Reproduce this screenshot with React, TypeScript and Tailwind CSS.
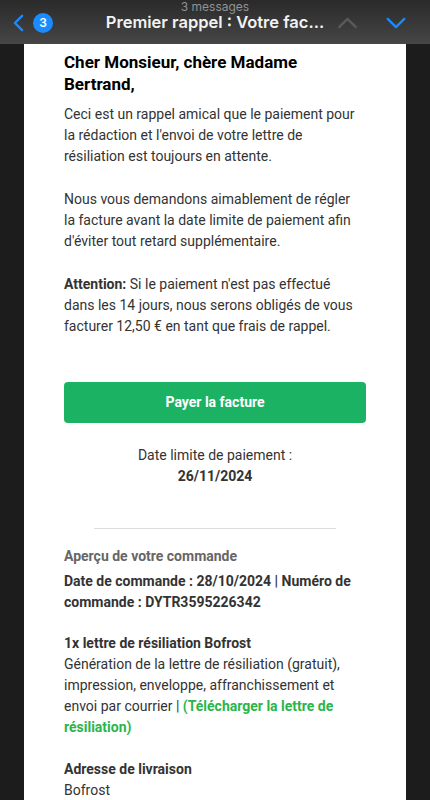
import React from 'react';

function Chevron({ dir, className }: { dir: 'left' | 'up' | 'down'; className?: string }) {
  if (dir === 'left') {
    return (
      <svg viewBox="0 0 12 20" className={className} fill="none">
        <path d="M10 2L2 10l8 8" stroke="currentColor" strokeWidth="2.6" strokeLinecap="round" strokeLinejoin="round" />
      </svg>
    );
  }
  const d = dir === 'up' ? 'M2 11L11 2l9 9' : 'M2 2l9 9 9-9';
  return (
    <svg viewBox="0 0 22 13" className={className} fill="none">
      <path d={d} stroke="currentColor" strokeWidth="2.4" strokeLinecap="round" strokeLinejoin="round" />
    </svg>
  );
}

function Header() {
  return (
    <header className="relative h-[44px] bg-gradient-to-b from-[#2a2a2a] to-[#464646] font-['Inter',sans-serif]">
      <div className="absolute left-0 right-0 top-0 text-center text-[12px] leading-[13px] text-[#929292]">
        3 messages
      </div>
      <div className="grid h-full grid-cols-[1fr_auto_1fr] items-center pt-[1px]">
        <div className="flex items-center gap-[9px] pl-[13px]">
          <Chevron dir="left" className="h-[18px] w-[11px] text-[#1a8cff]" />
          <span className="flex h-[20px] w-[20px] items-center justify-center rounded-full bg-[#1a8cff] text-[12px] font-semibold text-white">
            3
          </span>
        </div>
        <div className="text-[16.5px] font-semibold text-[#f2f2f2]">Premier rappel : Votre fac...</div>
        <div className="flex items-center justify-end gap-[27px] pr-[23px]">
          <Chevron dir="up" className="h-[12px] w-[21px] text-[#5a5a5a]" />
          <Chevron dir="down" className="h-[12px] w-[22px] text-[#1a8cff]" />
        </div>
      </div>
    </header>
  );
}

export default function App() {
  return (
    <div className="h-[800px] overflow-hidden bg-[#1c1c1c]">
      <Header />
      <main className="mx-[24px] h-[756px] bg-white px-[40px] pt-[7px] font-['Roboto',sans-serif] text-[14px] leading-[21px] text-[#333333]">
        <h1 className="text-[17px] font-bold leading-[22px] text-black">Cher Monsieur, chère Madame Bertrand,</h1>
        <div className="pr-[6px]">
          <p className="mt-[9px]">
            Ceci est un rappel amical que le paiement pour la rédaction et l'envoi de votre lettre de résiliation est
            toujours en attente.
          </p>
          <p className="mt-[22px]">
            Nous vous demandons aimablement de régler la facture avant la date limite de paiement afin d'éviter tout
            retard supplémentaire.
          </p>
          <p className="mt-[22px]">
            <strong className="font-bold">Attention:</strong> Si le paiement n'est pas effectué dans les 14 jours, nous
            serons obligés de vous facturer 12,50 € en tant que frais de rappel.
          </p>
        </div>
        <button
          type="button"
          className="mt-[45px] flex h-[41px] w-full items-center justify-center rounded-[4px] bg-[#1cb263] text-[14px] font-bold text-white"
        >
          Payer la facture
        </button>
        <div className="mt-[22px] text-center">
          <div>Date limite de paiement :</div>
          <div className="font-bold">26/11/2024</div>
        </div>
        <hr className="mx-auto mt-[41px] w-4/5 border-t border-[#dcdcdc]" />
        <div className="pr-[6px]">
          <h2 className="mt-[17px] font-bold text-[#666666]">Aperçu de votre commande</h2>
          <p className="mt-[4px] font-bold">Date de commande : 28/10/2024 | Numéro de commande : DYTR3595226342</p>
          <div className="mt-[20px]">
            <p className="font-bold">1x lettre de résiliation Bofrost</p>
            <p>
              Génération de la lettre de résiliation (gratuit), impression, enveloppe, affranchissement et envoi par
              courrier | <a className="font-bold text-[#2bb54b]">(Télécharger la lettre de résiliation)</a>
            </p>
          </div>
          <div className="mt-[21px]">
            <p className="font-bold">Adresse de livraison</p>
            <p>Bofrost</p>
          </div>
        </div>
      </main>
    </div>
  );
}
